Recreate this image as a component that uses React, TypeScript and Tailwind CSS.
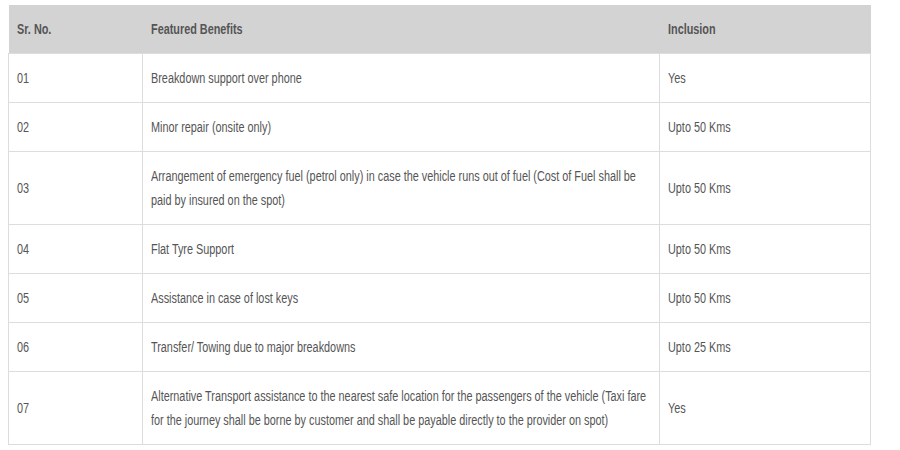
const rows = [
  { no: "01", benefit: "Breakdown support over phone", inclusion: "Yes" },
  { no: "02", benefit: "Minor repair (onsite only)", inclusion: "Upto 50 Kms" },
  {
    no: "03",
    benefit:
      "Arrangement of emergency fuel (petrol only) in case the vehicle runs out of fuel (Cost of Fuel shall be paid by insured on the spot)",
    inclusion: "Upto 50 Kms",
  },
  { no: "04", benefit: "Flat Tyre Support", inclusion: "Upto 50 Kms" },
  { no: "05", benefit: "Assistance in case of lost keys", inclusion: "Upto 50 Kms" },
  { no: "06", benefit: "Transfer/ Towing due to major breakdowns", inclusion: "Upto 25 Kms" },
  {
    no: "07",
    benefit:
      "Alternative Transport assistance to the nearest safe location for the passengers of the vehicle (Taxi fare for the journey shall be borne by customer and shall be payable directly to the provider on spot)",
    inclusion: "Yes",
  },
];

// narrow face: the reference uses a condensed Arial, squeeze regular Liberation Sans
const Narrow = ({ children }: { children: React.ReactNode }) => (
  <div className="w-[130%] origin-left scale-x-[0.775]">{children}</div>
);

export default function App() {
  return (
    <div className="w-[900px] h-[450px] bg-white pl-2 pt-[5px]">
      <table
        className="w-[863px] table-fixed border-collapse text-[14px] leading-6 text-[#555]"
        style={{ fontFamily: '"Liberation Sans", Arial, sans-serif' }}
      >
        <colgroup>
          <col className="w-[134px]" />
          <col className="w-[517px]" />
          <col />
        </colgroup>
        <thead>
          <tr className="bg-[#d3d3d3]">
            <th className="px-2 py-3 text-left font-bold">
              <Narrow>Sr. No.</Narrow>
            </th>
            <th className="px-2 py-3 text-left font-bold">
              <Narrow>Featured Benefits</Narrow>
            </th>
            <th className="px-2 py-3 text-left font-bold">
              <Narrow>Inclusion</Narrow>
            </th>
          </tr>
        </thead>
        <tbody>
          {rows.map((r) => (
            <tr key={r.no}>
              <td className="border border-[#dddddd] px-2 py-3 align-middle">
                <Narrow>{r.no}</Narrow>
              </td>
              <td className="border border-[#dddddd] px-2 py-3 align-middle">
                <Narrow>{r.benefit}</Narrow>
              </td>
              <td className="border border-[#dddddd] px-2 py-3 align-middle">
                <Narrow>{r.inclusion}</Narrow>
              </td>
            </tr>
          ))}
        </tbody>
      </table>
    </div>
  );
}
